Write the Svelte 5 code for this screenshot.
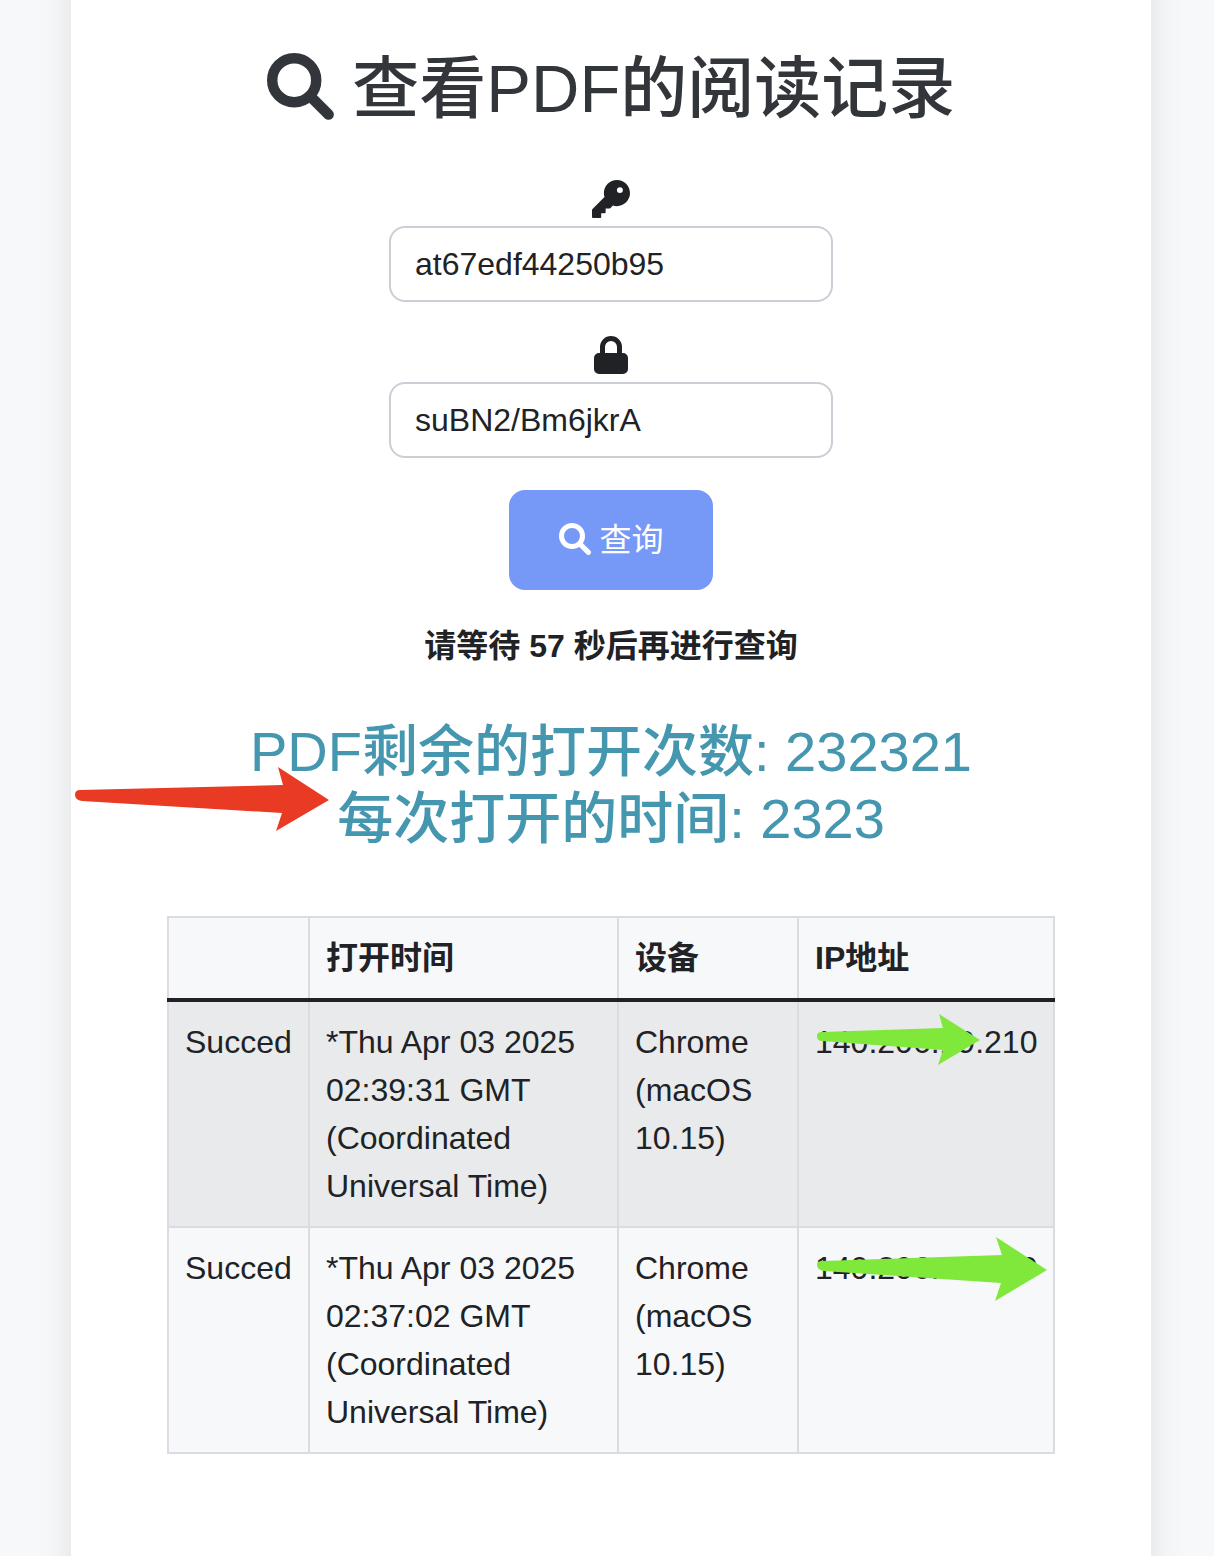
<script lang="ts">
  let token = $state('at67edf44250b95');
  let password = $state('suBN2/Bm6jkrA');
  const wait = 57;
  const remaining = 232321;
  const duration = 2323;
  const arrows = {
    red: { box: '0 0 254 64', d: 'M5 23 L208 18 L203 0 L254 33 L201 64 L207 46 L7 34 Q0 33 0 28 Q0 23 5 23Z' },
    short: { box: '0 0 164 51', d: 'M5 18 L126 14 L122 0 L163 26 L121 51 L126 36 L5 27 Q0 27 0 22 Q0 18 5 18Z' },
    long: { box: '0 0 231 64', d: 'M5 24 L185 18 L179 0 L230 33 L178 64 L184 46 L7 34 Q0 33 0 28 Q0 24 5 24Z' },
  };
  type Mark = keyof typeof arrows;
  const records: { status: string; time: string; device: string; ip: string; mark: Mark }[] = [
    { status: 'Succed', time: '*Thu Apr 03 2025 02:39:31 GMT (Coordinated Universal Time)', device: 'Chrome (macOS 10.15)', ip: '140.206.19.210', mark: 'short' },
    { status: 'Succed', time: '*Thu Apr 03 2025 02:37:02 GMT (Coordinated Universal Time)', device: 'Chrome (macOS 10.15)', ip: '140.206.19.210', mark: 'long' },
  ];
</script>

{#snippet search()}
  <svg class="icon" viewBox="0 0 512 512" aria-hidden="true">
    <circle cx="208" cy="208" r="168" fill="none" stroke="currentColor" stroke-width="80" />
    <path d="M340 340L470 470" stroke="currentColor" stroke-width="82" stroke-linecap="round" />
  </svg>
{/snippet}

{#snippet arrow(kind: Mark)}
  <svg class="arrow {kind}" viewBox={arrows[kind].box} aria-hidden="true">
    <path d={arrows[kind].d} />
  </svg>
{/snippet}

<main>
  <section class="card">
    <h1>{@render search()} 查看PDF的阅读记录</h1>

    <form onsubmit={(e) => e.preventDefault()}>
      <label for="token" aria-label="Token">
        <svg class="key" viewBox="0 0 512 512" aria-hidden="true">
          <path d="M336 352c97.200 0 176-78.800 176-176S433.200 0 336 0S160 78.800 160 176c0 18.700 2.900 36.800 8.300 53.700L7 391c-4.500 4.500-7 10.600-7 17v92c0 7 5 12 12 12h100c7 0 12-5 12-12V448h48c7 0 12-5 12-12V384h48c6.400 0 12.500-2.500 17-7l33.300-33.300c16.900 5.400 35 8.300 53.700 8.300zM376 96a40 40 0 1 1 0 80 40 40 0 1 1 0-80z" />
        </svg>
      </label>
      <input id="token" type="text" bind:value={token} />

      <label for="password" aria-label="Password">
        <svg class="lock" viewBox="0 0 34 38" aria-hidden="true">
          <path fill-rule="evenodd" d="M6 17V11a11 11 0 0 1 22 0v6h1a5 5 0 0 1 5 5v11a5 5 0 0 1-5 5H5a5 5 0 0 1-5-5V22a5 5 0 0 1 5-5zM11 17h12V11a6 6 0 0 0-12 0z" />
        </svg>
      </label>
      <input id="password" type="text" bind:value={password} />

      <button type="submit">{@render search()} 查询</button>
    </form>

    <p class="notice">请等待 {wait} 秒后再进行查询</p>

    <div class="summary">
      <h3>PDF剩余的打开次数: {remaining}<br />每次打开的时间: {duration}</h3>
      {@render arrow('red')}
    </div>

    <table>
      <colgroup>
        <col class="c-status" />
        <col />
        <col class="c-device" />
        <col class="c-ip" />
      </colgroup>
      <thead>
        <tr><th></th><th>打开时间</th><th>设备</th><th>IP地址</th></tr>
      </thead>
      <tbody>
        {#each records as r}
          <tr>
            <td>{r.status}</td>
            <td>{r.time}</td>
            <td>{r.device}</td>
            <td><div class="ip">{r.ip}{@render arrow(r.mark)}</div></td>
          </tr>
        {/each}
      </tbody>
    </table>
  </section>
</main>

<style>
  :global(body) {
    background: #f7f8fa;
  }
  main {
    box-sizing: border-box;
    min-height: 100vh;
    padding: 0 63px 0 71px;
    overflow: hidden;
    display: flex;
    background: #f7f8fa;
    color: #202225;
    font: 32px/48px "Liberation Sans", "Noto Sans CJK SC", sans-serif;
  }
  .card {
    flex: 1;
    box-sizing: border-box;
    min-width: 0;
    margin: -64px 0;
    padding: 112px 96px 164px;
    background: #fff;
    box-shadow: 0 0 32px rgba(0, 0, 0, 0.1);
  }
  h1,
  h3 {
    margin: 0;
    font-weight: 500;
    text-align: center;
  }
  h1 {
    color: #32363b;
    font-size: 67px;
    line-height: 82px;
  }
  .icon {
    width: 1em;
    height: 1em;
    fill: currentColor;
    vertical-align: -0.125em;
  }
  form {
    display: flex;
    flex-direction: column;
    align-items: center;
    margin-top: 48px;
  }
  label {
    display: flex;
    justify-content: center;
    height: 48px;
  }
  label svg {
    height: 38px;
    margin-top: 2px;
    fill: #202225;
  }
  .key {
    width: 38px;
  }
  .lock {
    width: 34px;
  }
  input {
    box-sizing: border-box;
    width: 50%;
    height: 76px;
    margin: 0 0 32px;
    padding: 12px 24px;
    border: 2px solid #cbced4;
    border-radius: 16px;
    background: #fff;
    color: inherit;
    font: inherit;
  }
  button {
    height: 100px;
    padding: 0 48px;
    border: 2px solid #7699f8;
    border-radius: 16px;
    background: #7699f8;
    color: #fff;
    font: inherit;
  }
  .notice {
    margin: 32px 0 48px;
    font-weight: 700;
    text-align: center;
  }
  .summary {
    position: relative;
    margin-bottom: 64px;
  }
  h3 {
    color: #4596af;
    font-size: 56px;
    line-height: 67px;
  }
  .arrow {
    position: absolute;
    fill: #7fe83a;
  }
  .red {
    top: 49px;
    left: -92px;
    width: 254px;
    height: 64px;
    fill: #e93a24;
  }
  table {
    width: 100%;
    table-layout: fixed;
    border-collapse: collapse;
    background: #f7f8fa;
  }
  .c-status {
    width: 141px;
  }
  .c-device {
    width: 180px;
  }
  .c-ip {
    width: 256px;
  }
  th,
  td {
    padding: 16px;
    border: 2px solid #dadce2;
    text-align: left;
    vertical-align: top;
  }
  th {
    height: 48px;
  }
  thead th {
    border-bottom: 4px solid #202225;
  }
  tbody tr:nth-child(odd) {
    background: #e9eaeb;
  }
  .ip {
    position: relative;
  }
  .short {
    top: -4px;
    left: 2px;
    width: 164px;
    height: 51px;
  }
  .long {
    top: -7px;
    left: 2px;
    width: 231px;
    height: 64px;
  }
</style>
